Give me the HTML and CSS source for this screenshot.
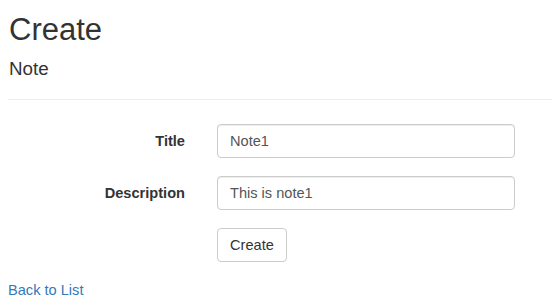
FILE: index.html
```html
<!DOCTYPE html>
<html>
<head>
    <meta charset="utf-8">
    <title>Create</title>
    <meta name="viewport" content="width=device-width, initial-scale=1">
    <link rel="stylesheet" href="styles.css">
</head>
<body>
    <div class="container">
        <h2 class="page-title">Create</h2>
        <form class="form-horizontal">
            <h4 class="subtitle">Note</h4>
            <hr class="divider">
            <div class="form-group">
                <label class="control-label" for="Title">Title</label>
                <input class="form-control" type="text" id="Title" name="Title" value="Note1">
            </div>
            <div class="form-group">
                <label class="control-label" for="Description">Description</label>
                <input class="form-control" type="text" id="Description" name="Description" value="This is note1">
            </div>
            <div class="form-group">
                <span></span>
                <div><button type="button" class="btn">Create</button></div>
            </div>
        </form>
        <div class="back">
            <a href="#">Back to List</a>
        </div>
    </div>
</body>
</html>
```

FILE: styles.css
```css
* {
    box-sizing: border-box;
}
body {
    margin: 0;
    background-color: #fff;
    color: #333;
    font-family: "Liberation Sans", Arial, sans-serif;
    font-size: 14.6px;
    line-height: 20px;
}
.container {
    padding: 0 2px 0 8px;
}
.page-title {
    font-size: 31px;
    font-weight: 500;
    line-height: 33px;
    margin: 13px 0 13px 1px;
}
.subtitle {
    font-size: 18.8px;
    font-weight: 500;
    line-height: 20px;
    margin: 0 0 10px 1px;
}
.divider {
    border: 0;
    border-top: 1px solid #eee;
    margin: 20px 0 24px;
}
.form-group {
    display: grid;
    grid-template-columns: 177px 298px;
    column-gap: 32px;
    margin-bottom: 18px;
}
.control-label {
    text-align: right;
    font-weight: bold;
    padding-top: 7px;
}
.form-control {
    display: block;
    width: 100%;
    height: 34px;
    padding: 6px 12px;
    font-family: inherit;
    font-size: 14.6px;
    color: #555;
    background-color: #fff;
    border: 1px solid #ccc;
    border-radius: 4px;
    box-shadow: inset 0 1px 1px rgba(0, 0, 0, 0.075);
}
.btn {
    height: 34px;
    padding: 6px 12px;
    font-family: inherit;
    font-size: 14.6px;
    color: #333;
    background-color: #fff;
    border: 1px solid #ccc;
    border-radius: 4px;
    cursor: pointer;
}
.back a {
    color: #337ab7;
    text-decoration: none;
}
```
